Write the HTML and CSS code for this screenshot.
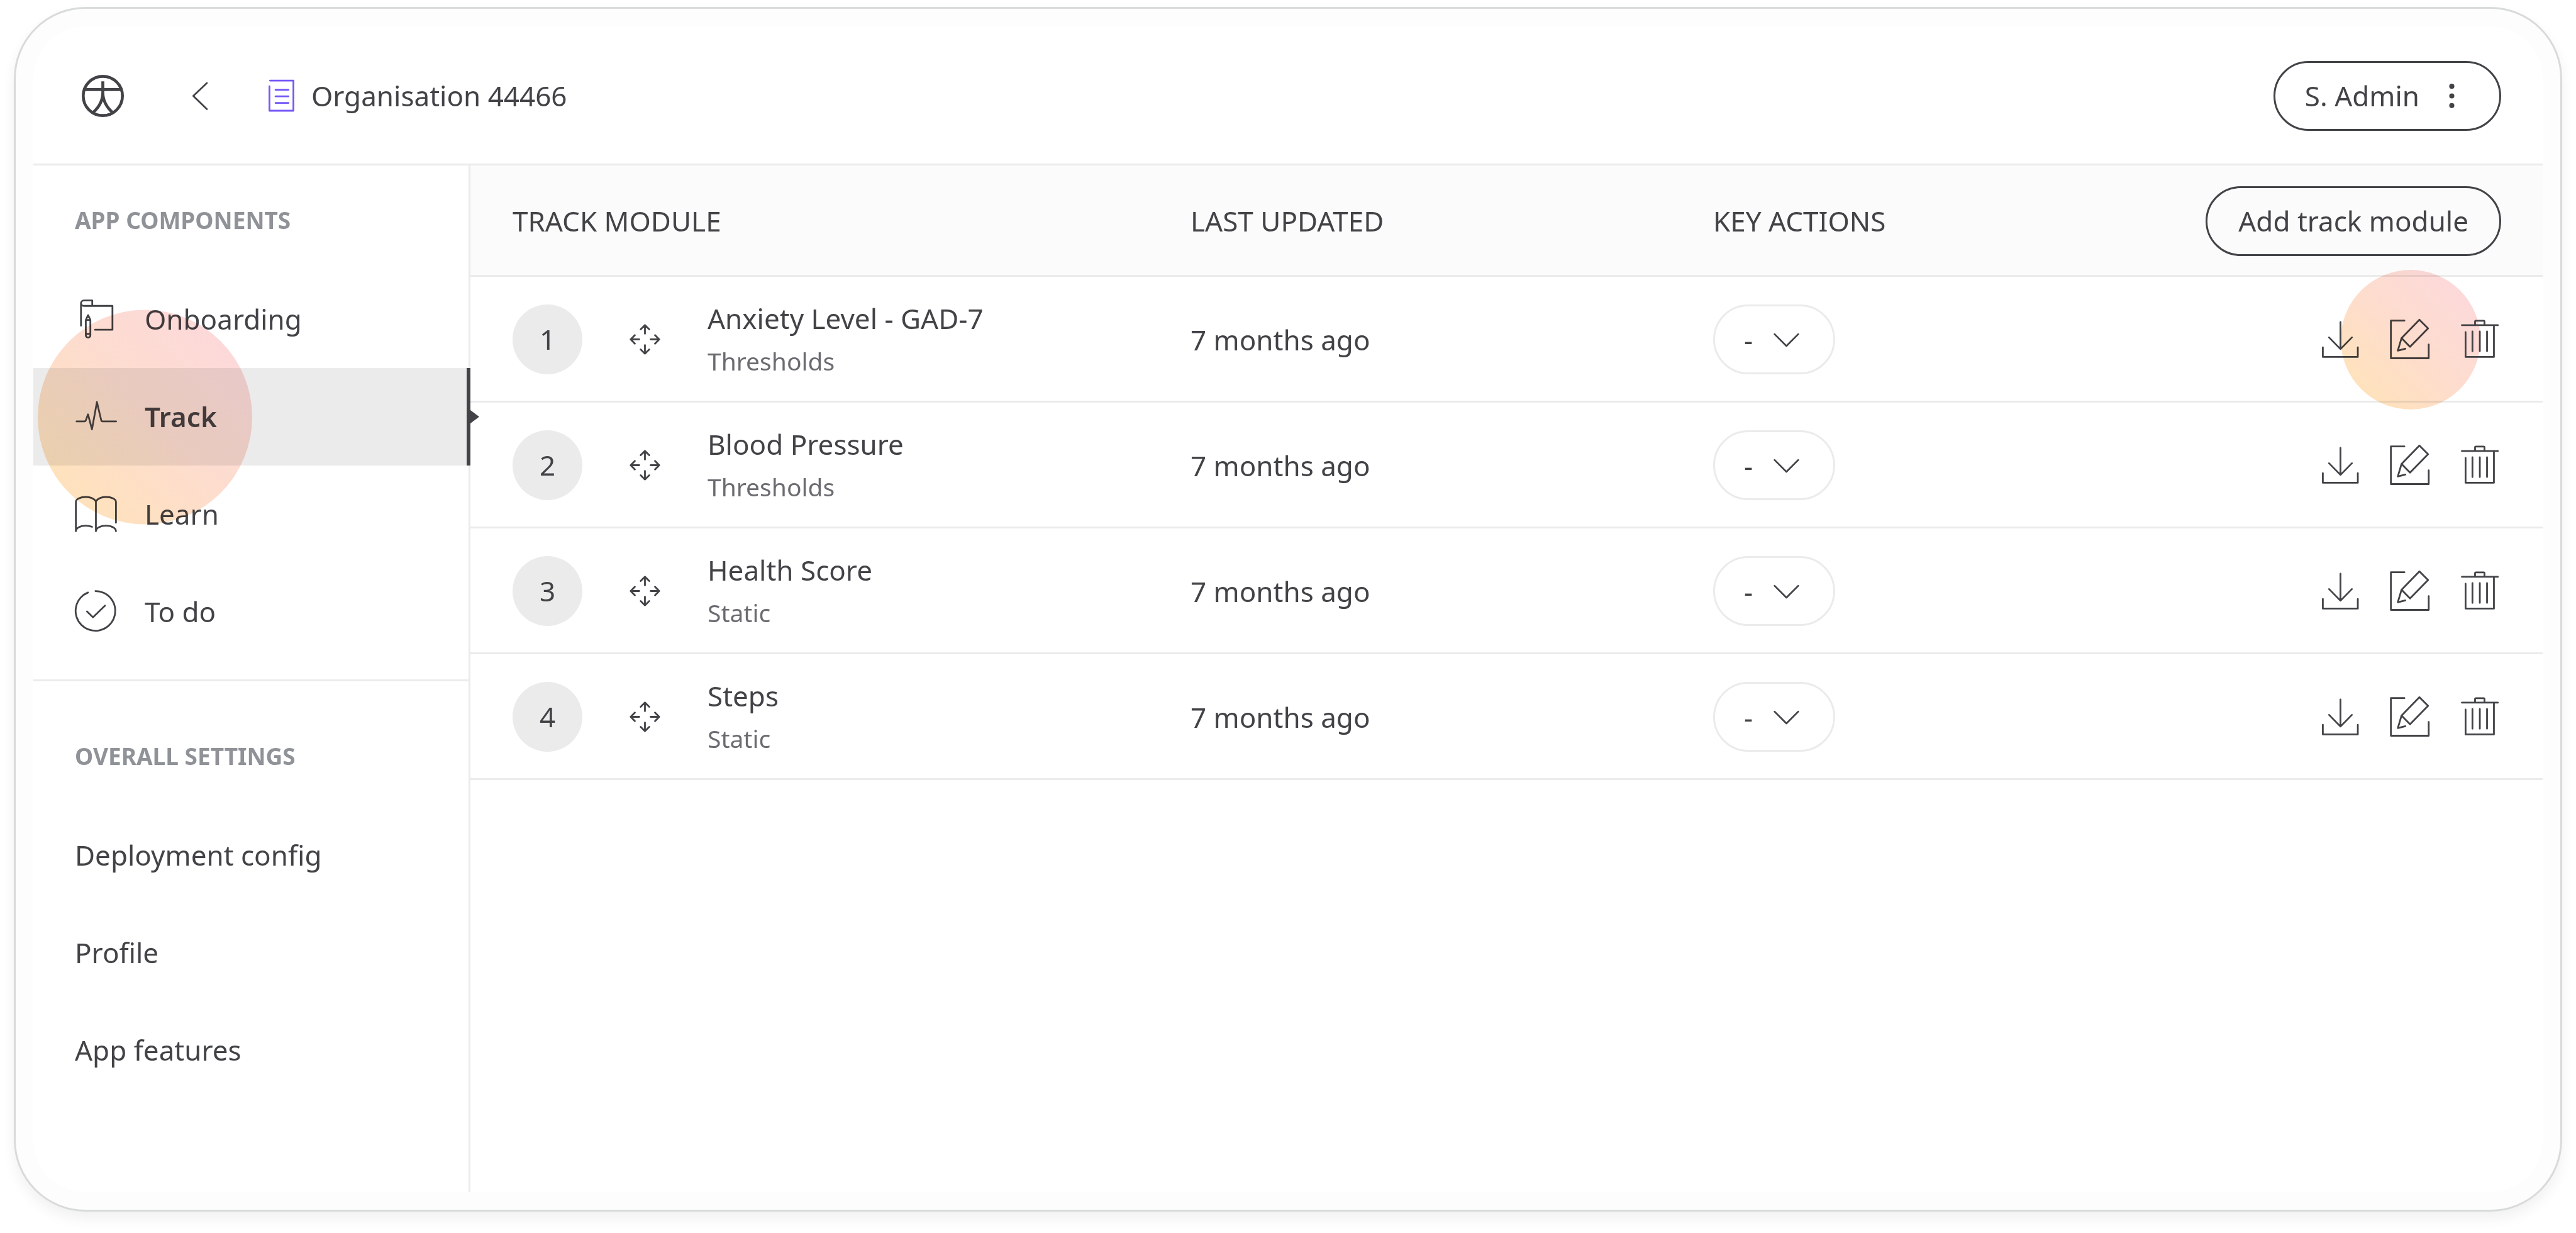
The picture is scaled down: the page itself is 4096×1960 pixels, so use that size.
FILE: index.html
```html
<!DOCTYPE html>
<html lang="en">
<head>
<meta charset="utf-8">
<title>Organisation 44466 – Track</title>
<link rel="stylesheet" href="styles.css">
</head>
<body>
<svg class="sprite" aria-hidden="true">
  <symbol id="i-move" viewBox="0 0 96 96"><path d="M48 35V15.500M38.300 25L48 15.500 57.700 25M48 61V80.500M38.300 71L48 80.500 57.700 71M35 48H15.500M25 38.300L15.500 48 25 57.700M61 48H80.500M71 38.300L80.500 48 71 57.700"/></symbol>
  <symbol id="i-chevron" viewBox="0 0 96 96"><path d="M21 36L48 63 75 36"/></symbol>
  <symbol id="i-download" viewBox="0 0 96 96"><path d="M48 8.500V70M22 43.500L48 70 74 43.500M7.800 66V88H87.500V66"/></symbol>
  <symbol id="i-edit" viewBox="0 0 96 96"><path d="M34.600 5.300H3.800V91H90V59.500M36.700 69.300L19.600 73.700 28.100 45 68.800 3.300 88.500 23 47.400 64.700 28.100 45"/></symbol>
  <symbol id="i-trash" viewBox="0 0 96 96"><path d="M6.500 15.700H88.500M36.500 15.700V7.700a2 2 0 0 1 2-2H56a2 2 0 0 1 2 2V15.700M14.900 31.500V88H79.500V15.700M30.600 30V75M47.400 30V75M63.800 30V75"/></symbol>
</svg>

<div class="frame">
  <div class="app">
    <header class="topbar">
      <a class="logo" href="#" aria-label="Home">
        <svg class="icon icon-logo" viewBox="0 0 96 96"><circle cx="48" cy="48" r="44.700"/><path d="M48 14.700V40C48 58 40 73 25.500 86M48 40C48 58 56 73 70.500 86M7 33.500H89"/></svg>
      </a>
      <button class="icon-button back" aria-label="Back">
        <svg class="icon" viewBox="0 0 96 96"><path d="M63 18.700L32 48 63 78"/></svg>
      </button>
      <div class="organisation">
        <svg class="icon icon-org" viewBox="0 0 96 96"><path d="M22 13H75.300V81.700H20.700V26M34.500 34H64M34.500 49H64M34.500 64H64"/></svg>
        <span>Organisation 44466</span>
      </div>
      <button class="pill user">
        <span>S. Admin</span>
        <svg class="icon icon-dots" viewBox="0 0 96 96"><circle cx="48" cy="26" r="5.800"/><circle cx="48" cy="48" r="5.800"/><circle cx="48" cy="70" r="5.800"/></svg>
      </button>
    </header>

    <div class="body">
      <nav class="sidebar">
        <section class="group">
          <h2 class="group-title">APP COMPONENTS</h2>
          <a class="item" href="#">
            <svg class="icon" viewBox="0 0 96 96"><path d="M14 64V13a6.500 6.500 0 0 1 6.500-6.500H39.700V19M14 12.500a6.500 6.500 0 0 0 6.500 6.500H85.700V73.300H46M25 51V86a5.200 5.200 0 0 0 10.400 0V51L30.200 40ZM25 51H35.400M25 82.700H35.400"/></svg>
            <span>Onboarding</span>
          </a>
          <a class="item active" href="#" aria-current="page">
            <svg class="icon" viewBox="0 0 96 96"><path d="M4 60H22Q24 60 25 57.500L30 44 39 78 50.300 16 60 57Q60.700 60 63 60H94"/></svg>
            <span>Track</span>
            <i class="spot spot-large"></i>
          </a>
          <a class="item" href="#">
            <svg class="icon" viewBox="0 0 96 96"><path d="M48 88V20C43 13 35 10 25.500 10C12 10 2.300 15 2.300 21.500V88C3 80 13 75.500 25 75.500C30 75.500 35 76.300 39.300 78M48 20C53 13 61 10 70.500 10C84 10 93.700 15 93.700 21.500V68.700M48 88C48.500 80 59 75.500 71 75.500C84 75.500 93.700 81 93.700 88"/></svg>
            <span>Learn</span>
          </a>
          <a class="item" href="#">
            <svg class="icon" viewBox="0 0 96 96"><path d="M47 2.200A45.200 45.200 0 1 1 30 5.500M27.700 48.600L41.300 61.800 68.700 35.400"/></svg>
            <span>To do</span>
          </a>
        </section>
        <section class="group">
          <h2 class="group-title">OVERALL SETTINGS</h2>
          <a class="item" href="#">Deployment config</a>
          <a class="item" href="#">Profile</a>
          <a class="item" href="#">App features</a>
        </section>
      </nav>

      <main class="content">
        <table class="modules">
          <colgroup><col class="col-module"><col class="col-updated"><col class="col-actions"><col></colgroup>
          <thead>
            <tr>
              <th scope="col">TRACK MODULE</th>
              <th scope="col">LAST UPDATED</th>
              <th scope="col">KEY ACTIONS</th>
              <th><div class="tools"><button class="pill add">Add track module</button></div></th>
            </tr>
          </thead>
          <tbody>
            <tr>
              <td><div class="module"><span class="number">1</span><svg class="icon move"><use href="#i-move"/></svg><div><div class="name">Anxiety Level - GAD-7</div><div class="kind">Thresholds</div></div></div></td>
              <td>7 months ago</td>
              <td><div class="picker"><select aria-label="Key action for Anxiety Level - GAD-7"><option>-</option></select><svg class="icon picker-arrow"><use href="#i-chevron"/></svg></div></td>
              <td><div class="tools">
                <button class="icon-button" aria-label="Download"><svg class="icon"><use href="#i-download"/></svg></button>
                <button class="icon-button" aria-label="Edit"><svg class="icon"><use href="#i-edit"/></svg><i class="spot spot-small"></i></button>
                <button class="icon-button" aria-label="Delete"><svg class="icon"><use href="#i-trash"/></svg></button>
              </div></td>
            </tr>
            <tr>
              <td><div class="module"><span class="number">2</span><svg class="icon move"><use href="#i-move"/></svg><div><div class="name">Blood Pressure</div><div class="kind">Thresholds</div></div></div></td>
              <td>7 months ago</td>
              <td><div class="picker"><select aria-label="Key action for Blood Pressure"><option>-</option></select><svg class="icon picker-arrow"><use href="#i-chevron"/></svg></div></td>
              <td><div class="tools">
                <button class="icon-button" aria-label="Download"><svg class="icon"><use href="#i-download"/></svg></button>
                <button class="icon-button" aria-label="Edit"><svg class="icon"><use href="#i-edit"/></svg></button>
                <button class="icon-button" aria-label="Delete"><svg class="icon"><use href="#i-trash"/></svg></button>
              </div></td>
            </tr>
            <tr>
              <td><div class="module"><span class="number">3</span><svg class="icon move"><use href="#i-move"/></svg><div><div class="name">Health Score</div><div class="kind">Static</div></div></div></td>
              <td>7 months ago</td>
              <td><div class="picker"><select aria-label="Key action for Health Score"><option>-</option></select><svg class="icon picker-arrow"><use href="#i-chevron"/></svg></div></td>
              <td><div class="tools">
                <button class="icon-button" aria-label="Download"><svg class="icon"><use href="#i-download"/></svg></button>
                <button class="icon-button" aria-label="Edit"><svg class="icon"><use href="#i-edit"/></svg></button>
                <button class="icon-button" aria-label="Delete"><svg class="icon"><use href="#i-trash"/></svg></button>
              </div></td>
            </tr>
            <tr>
              <td><div class="module"><span class="number">4</span><svg class="icon move"><use href="#i-move"/></svg><div><div class="name">Steps</div><div class="kind">Static</div></div></div></td>
              <td>7 months ago</td>
              <td><div class="picker"><select aria-label="Key action for Steps"><option>-</option></select><svg class="icon picker-arrow"><use href="#i-chevron"/></svg></div></td>
              <td><div class="tools">
                <button class="icon-button" aria-label="Download"><svg class="icon"><use href="#i-download"/></svg></button>
                <button class="icon-button" aria-label="Edit"><svg class="icon"><use href="#i-edit"/></svg></button>
                <button class="icon-button" aria-label="Delete"><svg class="icon"><use href="#i-trash"/></svg></button>
              </div></td>
            </tr>
          </tbody>
        </table>
      </main>
    </div>
  </div>
</div>
</body>
</html>
```
FILE: styles.css
```css
:root {
  --ink: #424347;
  --muted: #6b6c71;
  --faint: #8f9297;
  --line: #ebebeb;
}

* { box-sizing: border-box; }

body {
  margin: 0;
  min-height: 100vh;
  padding: 11px 22px 34px;
  display: flex;
  background: #fff;
  color: var(--ink);
  font: 44px/66px "Noto Sans", sans-serif;
}

a { color: inherit; text-decoration: none; }

button {
  margin: 0;
  padding: 0;
  border: 0;
  background: none;
  color: inherit;
  font: inherit;
  cursor: pointer;
}

.sprite { position: absolute; width: 0; height: 0; }

.icon {
  display: block;
  flex: none;
  width: 67px;
  height: 67px;
  overflow: visible;
  fill: none;
  stroke: currentColor;
  stroke-width: 4;
  stroke-linecap: round;
  stroke-linejoin: round;
}

.icon-logo { stroke-width: 6.7; stroke-linecap: butt; }
.icon-org { color: #7557f5; }
.icon-dots { fill: currentColor; stroke: none; }

.frame {
  flex: 1;
  display: flex;
  padding: 28px;
  border: 3px solid #d9dbdb;
  border-radius: 114px;
  background: #fdfdfd;
  box-shadow: 0 11px 22px rgba(0, 0, 0, .06);
}

.app {
  flex: 1;
  display: flex;
  flex-direction: column;
  min-width: 0;
  border-radius: 83px;
  background: #fff;
}

/* Top bar */
.topbar {
  display: flex;
  align-items: center;
  height: 221px;
  padding: 2px 66px 0 77px;
  border-bottom: 3px solid var(--line);
}

.back { margin: 0 62px 0 88px; }

.organisation {
  display: flex;
  align-items: center;
  gap: 14px;
}

.pill {
  display: flex;
  align-items: center;
  height: 111px;
  padding: 0 49px;
  border: 3px solid var(--ink);
  border-radius: 56px;
  white-space: nowrap;
}

.user {
  gap: 18px;
  margin-left: auto;
  padding: 0 42px 0 47px;
}

/* Sidebar */
.body { flex: 1; display: flex; }

.sidebar {
  flex: none;
  width: 695px;
  border-right: 3px solid var(--line);
}

.group + .group { padding-top: 32px; }

.group:first-child {
  padding-bottom: 30px;
  border-bottom: 3px solid var(--line);
}

.group-title {
  margin: 0;
  padding: 63px 66px 56px;
  color: var(--faint);
  font-size: 37px;
  font-weight: 700;
  line-height: 48px;
}

.item {
  display: flex;
  align-items: center;
  gap: 44px;
  height: 155px;
  padding: 0 66px 2px;
}

.active {
  position: relative;
  margin-right: -3px;
  border-right: 6px solid var(--ink);
  background: var(--line);
  font-weight: 600;
}

.active::after {
  content: "";
  position: absolute;
  top: 50%;
  left: 100%;
  width: 20px;
  height: 30px;
  background: var(--ink);
  clip-path: polygon(0 0, 100% 50%, 0 100%);
  transform: translateY(-50%);
}

/* Round colour spots laid over the thing being pointed out */
.spot {
  position: absolute;
  top: 50%;
  border-radius: 50%;
  background: linear-gradient(45deg, #ffe4b5, #fddcd0 55%, #fcd8de);
  mix-blend-mode: multiply;
  pointer-events: none;
  transform: translateY(-50%);
}

.spot-large { left: 7px; width: 341px; height: 341px; }

.spot-small {
  left: 50%;
  width: 222px;
  height: 222px;
  transform: translate(-50%, -50%);
}

/* Module table */
.content { flex: 1; min-width: 0; }

.modules {
  width: 100%;
  table-layout: fixed;
  border-collapse: separate;
  border-spacing: 0;
}

.col-module { width: 1145px; }
.col-updated { width: 831px; }
.col-actions { width: 600px; }

.modules th,
.modules td {
  padding: 2px 0 0;
  border-bottom: 3px solid var(--line);
  text-align: left;
  vertical-align: middle;
}

.modules th {
  height: 177px;
  background: #fbfbfb;
  font-weight: 400;
}

.modules td { height: 200px; }

.modules th:first-child,
.modules td:first-child { padding-left: 67px; }

.modules th:last-child,
.modules td:last-child { padding-right: 66px; }

.module { display: flex; align-items: center; }

.number {
  width: 111px;
  border-radius: 50%;
  background: var(--line);
  line-height: 111px;
  text-align: center;
}

.move { margin: 0 66px; }

.name,
.kind { line-height: 68px; }

.kind {
  color: var(--muted);
  font-size: 39px;
}

.picker { position: relative; width: 194px; }

.picker select {
  appearance: none;
  display: block;
  width: 100%;
  height: 111px;
  padding: 0 0 0 46px;
  border: 3px solid var(--line);
  border-radius: 56px;
  background: none;
  color: inherit;
  font: inherit;
}

.picker-arrow {
  position: absolute;
  top: 22px;
  left: 83px;
  pointer-events: none;
}

.tools {
  display: flex;
  justify-content: flex-end;
  gap: 44px;
}

.icon-button { position: relative; flex: none; }
```
